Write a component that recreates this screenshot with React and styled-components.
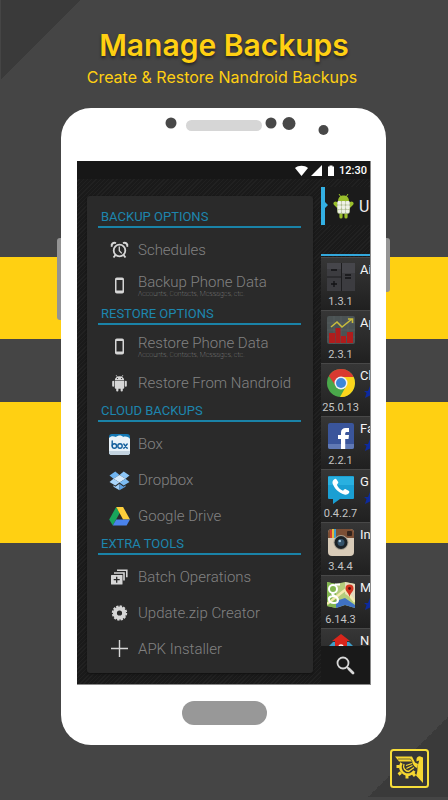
import React from 'react';
import styled, { createGlobalStyle } from 'styled-components';

const GlobalStyle = createGlobalStyle`
  * { box-sizing: border-box; }
  body { margin: 0; background: #454545; }
  button {
    border: 0;
    padding: 0;
    background: none;
    font: inherit;
    color: inherit;
    text-align: left;
  }
  svg { display: block; flex: none; }
`;

/* Page */

const Page = styled.main`
  display: flex;
  flex-direction: column;
  min-height: 100vh;
  font-family: Roboto, sans-serif;
  background:
    linear-gradient(135deg, #3a3a3a 50%, transparent 50%) 1px 0 / 80px 80px no-repeat,
    linear-gradient(315deg, #3a3a3a 50%, transparent 50%) right 0 bottom 3px / 80px 80px no-repeat,
    linear-gradient(#454545 257px, #ffd012 257px, #ffd012 339px, #454545 339px,
      #454545 402px, #ffd012 402px, #ffd012 543px, #454545 543px);
`;

const Header = styled.header`
  padding-top: 24px;
  height: 108px;
  text-align: center;
  color: #ffd012;
  font-family: Inter, sans-serif;
`;

const Title = styled.h1`
  margin: 0;
  font-size: 30px;
  line-height: 42px;
  font-weight: 600;
  text-shadow: 0 2px 3px rgba(0, 0, 0, 0.5);
`;

const Subtitle = styled.p`
  margin: 0;
  padding-right: 4px;
  font-size: 16px;
  line-height: 22px;
`;

const Footer = styled.footer`
  display: flex;
  justify-content: flex-end;
  padding: 4px 19px 12px 0;
`;

/* Phone */

const Phone = styled.section`
  position: relative;
  margin: 0 62px 0 61px;
  padding: 0 15px 0 16px;
  border-radius: 30px;
  background: #fff;
`;

const SideKey = styled.span`
  position: absolute;
  top: 130px;
  ${(p) => p.$side}: -4px;
  width: 4px;
  height: ${(p) => p.$length}px;
  border-radius: ${(p) => (p.$side === 'left' ? '3px 0 0 3px' : '0 3px 3px 0')};
  background: #949494;
`;

const Sensors = styled.div`
  display: flex;
  justify-content: center;
  height: 53px;
  padding: 9px 0 0 45px;
`;

const Bottom = styled.div`
  display: flex;
  justify-content: center;
  padding: 16px 0 20px;
`;

const HomeKey = styled.button`
  width: 85px;
  height: 24px;
  border-radius: 12px;
  background: #989898;
`;

const Screen = styled.div`
  border: solid #8a8a8a;
  border-width: 0 1px 1px 0;
  background: #1c1c1c repeating-linear-gradient(135deg, #1a1a1a 0 2px, #212121 2px 3px);
`;

const StatusBar = styled.div`
  display: flex;
  justify-content: flex-end;
  align-items: center;
  gap: 4px;
  height: 18px;
  padding: 1px 3px 0 0;
  background: #171717;
  color: #fff;
  font-size: 11px;
  font-weight: 500;
`;

const Content = styled.div`
  display: flex;
  height: 505px;
`;

/* Drawer */

const Drawer = styled.nav`
  flex: 1;
  min-width: 0;
  padding: 17px 8px 11px 10px;
`;

const Panel = styled.div`
  padding: 11px 12px 6px 11px;
  border-radius: 3px;
  background: #2a2a2a;
  box-shadow: 0 1px 2px #111;
`;

const SectionTitle = styled.h2`
  margin: 0 0 4px;
  padding-left: 3px;
  border-bottom: 2px solid #1a83a8;
  color: #1d86ae;
  font-size: 13px;
  line-height: 19px;
  font-weight: 400;
`;

const Item = styled.button`
  display: flex;
  align-items: center;
  gap: 8px;
  width: 100%;
  height: 36px;
  padding-left: 11px;
  white-space: nowrap;
`;

const ItemText = styled.span`
  display: flex;
  flex-direction: column;
  color: #828282;
  font-size: 15px;
  line-height: 16px;
  font-weight: 300;
`;

const ItemNote = styled.small`
  font-size: 7px;
  line-height: 8px;
  font-weight: 100;
  color: #a0a0a0;
`;

/* App list */

const Apps = styled.div`
  display: flex;
  flex-direction: column;
  width: 49px;
  padding-top: 8px;
  overflow: hidden;
`;

const AppsHeader = styled.div`
  display: flex;
  align-items: center;
  gap: 5px;
  height: 38px;
  background: #1b1b1b;
  color: #eee;
  font-size: 16px;
`;

const Tabs = styled.div`
  height: 31px;
  border-bottom: 2px solid #33a8dc;
`;

const AppList = styled.div`
  flex: 1;
  min-height: 0;
  padding-top: 1px;
  overflow: hidden;
`;

const AppRow = styled.button`
  display: grid;
  grid-template-columns: 39px 1fr;
  grid-template-rows: 35px 17px;
  width: 100%;
  height: 53px;
  border-top: 1px solid #484848;
  background: linear-gradient(#363636, #202020);
  white-space: nowrap;
  overflow: hidden;
`;

const AppIcon = styled.span`
  padding: 5px 0 0 6px;
`;

const AppName = styled.span`
  position: relative;
  padding-top: 3px;
  color: #f4f4f4;
  font-size: 13px;
  line-height: 18px;
  font-weight: 400;
`;

const Star = styled.svg`
  position: absolute;
  top: 22px;
  left: 4px;
`;

const Version = styled.span`
  justify-self: center;
  color: #c4c4c4;
  font-size: 11px;
  line-height: 17px;
`;

const SearchBar = styled.div`
  display: flex;
  justify-content: center;
  align-items: center;
  height: 38px;
  background: #191919;
`;

/* Drawer icons */

const GREY = '#d6d6d6';

function ClockIcon() {
  return (
    <svg width="21" height="21" viewBox="0 0 21 21" fill="none" stroke={GREY}>
      <circle cx="10.5" cy="10.5" r="5.8" strokeWidth="1.8" />
      <path d="M10.3 6.500v4.3l2.5 2.6" strokeWidth="1.3" />
      <path d="M2.8 6.700C2 3.700 4.5 2 7 3.100M18.2 6.700c.8-3-1.7-4.7-4.2-3.6" strokeWidth="2" />
      <path d="M6.6 14.900 4.5 17.500M14.4 14.900l2.1 2.6" strokeWidth="1.8" />
    </svg>
  );
}

function PhoneIcon() {
  return (
    <svg width="21" height="21" viewBox="0 0 21 21">
      <rect x="6" y="1.5" width="9" height="16" rx="1.8" fill={GREY} />
      <rect x="7.5" y="4" width="6" height="10.5" fill="#2a2a2a" />
    </svg>
  );
}

function AndroidIcon() {
  return (
    <svg width="21" height="21" viewBox="0 0 21 21" fill={GREY}>
      <path d="M5.8 7.2C6 4.4 8 3.2 10.5 3.2S15 4.4 15.2 7.2z" />
      <path d="M7 2l1.4 2M14 2l-1.4 2" stroke={GREY} strokeWidth=".7" />
      <path d="M5.8 7.8h9.4v7a1 1 0 0 1-1 1H6.8a1 1 0 0 1-1-1z" />
      <rect x="3.2" y="7.8" width="2" height="6" rx="1" />
      <rect x="15.8" y="7.8" width="2" height="6" rx="1" />
      <rect x="7.2" y="14" width="2.2" height="4.6" rx="1" />
      <rect x="11.6" y="14" width="2.2" height="4.6" rx="1" />
      <circle cx="8.5" cy="5.5" r=".6" fill="#2a2a2a" />
      <circle cx="12.5" cy="5.5" r=".6" fill="#2a2a2a" />
    </svg>
  );
}

function BoxIcon() {
  return (
    <svg width="21" height="21" viewBox="0 0 21 21">
      <rect width="21" height="21" rx="3" fill="#1478b4" />
      <path d="M0 4c2-2 4-2 7-1 2-2 6-2 7 0 3-1 6 0 7 2v13a3 3 0 0 1-3 3H3a3 3 0 0 1-3-3z" fill="#e9f2f8" />
      <path d="M0 17h21v1a3 3 0 0 1-3 3H3a3 3 0 0 1-3-3z" fill="#c3d3df" />
      <g fill="none" stroke="#145f9c" strokeWidth="1.4" strokeLinecap="round">
        <path d="M3.2 7v5" />
        <circle cx="5.4" cy="12" r="2.2" />
        <circle cx="11" cy="12" r="2.2" />
        <path d="M14.8 10l3.4 4.2M18.2 10l-3.4 4.2" />
      </g>
    </svg>
  );
}

function DropboxIcon() {
  return (
    <svg width="21" height="21" viewBox="0 0 21 21">
      <path d="M6.3 1.5 10.5 5 4.5 8.7.5 5.5z" fill="#6fb4f0" />
      <path d="M14.7 1.5 10.5 5l6 3.7 4-3.2z" fill="#8cc6f7" />
      <path d="M4.5 8.7 10.5 5l6 3.7-6 3.8z" fill="#d4eafc" />
      <path d="M4.5 8.7.5 12l5.8 3.6 4.2-3.1z" fill="#a9d5fa" />
      <path d="M16.5 8.7l4 3.3-5.8 3.6-4.2-3.1z" fill="#7dbcf3" />
      <path d="M4.5 15.2v1.5l6 3.5v-6.500l-4.2 3z" fill="#9ccdf8" />
      <path d="M16.5 15.2v1.5l-6 3.5v-6.500l4.2 3z" fill="#5d9fe0" />
    </svg>
  );
}

function DriveIcon() {
  return (
    <svg width="21" height="21" viewBox="0 0 21 21">
      <path d="M7.2 1 10.7 7 3.8 19.5.2 13.5z" fill="#18a55b" />
      <path d="M7.2 1h6.900L21 13.500h-6.900z" fill="#fdce3b" />
      <path d="M7.2 13.5H21l-3.4 6H3.8z" fill="#4a83ec" />
    </svg>
  );
}

function BatchIcon() {
  return (
    <svg width="21" height="21" viewBox="0 0 21 21">
      <path d="M8 3.2h9.8v7" fill="none" stroke={GREY} strokeWidth="1.6" />
      <path d="M5 6h10v7.5" fill="none" stroke={GREY} strokeWidth="1.6" />
      <rect x="2" y="8" width="11.5" height="9.5" rx=".5" fill={GREY} />
      <path d="M7.7 9.7v6M4.7 12.7h6" stroke="#2a2a2a" strokeWidth="1.3" />
    </svg>
  );
}

function GearIcon() {
  return (
    <svg width="21" height="21" viewBox="0 0 21 21" fill="none" stroke={GREY}>
      <circle cx="10.5" cy="10" r="4.6" strokeWidth="4" />
      <circle cx="10.5" cy="10" r="6.8" strokeWidth="1.8" strokeDasharray="2.3 1.26" />
    </svg>
  );
}

function PlusIcon() {
  return (
    <svg width="21" height="21" viewBox="0 0 21 21">
      <path d="M10.5 1v17M2 9.5h17" stroke={GREY} strokeWidth="1.4" />
    </svg>
  );
}

/* App icons */

function BackupRobot() {
  return (
    <svg width="21" height="26" viewBox="0 0 21 26">
      <path d="M6 1l2 3M15 1l-2 3" stroke="#9abf2c" />
      <path d="M5 8c.3-4 2.5-5.5 5.5-5.5S15.7 4 16 8z" fill="#9abf2c" />
      <path d="M2.5 10.5 5 13M18.5 10.5 16 13" stroke="#9abf2c" strokeWidth="4" strokeLinecap="round" />
      <path d="M8 19v5M13 19v5" stroke="#9abf2c" strokeWidth="3.2" strokeLinecap="round" />
      <rect x="4" y="8" width="13" height="13" rx="3" fill="#a9b78a" />
      <g fill="#eef1e6">
        <rect x="4.5" y="8" width="3.7" height="3.7" rx="1" />
        <rect x="8.7" y="8" width="3.7" height="3.7" rx="1" />
        <rect x="12.9" y="8" width="3.7" height="3.7" rx="1" />
        <rect x="4.5" y="12.2" width="3.7" height="3.7" rx="1" />
        <rect x="8.7" y="12.2" width="3.7" height="3.7" rx="1" />
        <rect x="12.9" y="12.2" width="3.7" height="3.7" rx="1" />
        <rect x="5" y="16.4" width="3.2" height="3.7" rx="1" />
        <rect x="8.7" y="16.4" width="3.7" height="3.7" rx="1" />
        <rect x="12.9" y="16.4" width="3.2" height="3.7" rx="1" />
      </g>
    </svg>
  );
}

function CalculatorIcon() {
  return (
    <svg width="28" height="28" viewBox="0 0 28 28">
      <rect width="28" height="28" rx="1" fill="#1d1d1f" />
      <path d="M0 0h14v13.5H0zM0 14.5h14V28H0zM15 0h13v28H15z" fill="#3c3c40" />
      <path d="M0 0h14v6H0zM15 0h13v10H15z" fill="#46464b" />
      <path d="M4 7h6M4 21h6M7 18v6M18 12h6M18 15h6" stroke="#121214" strokeWidth="1.3" />
    </svg>
  );
}

function ChartIcon() {
  return (
    <svg width="28" height="28" viewBox="0 0 28 28">
      <rect width="28" height="28" rx="2" fill="#4b5354" />
      <path d="M0 7h28M0 14h28M0 21h28M7 0v28M14 0v28M21 0v28" stroke="#5d6667" strokeWidth=".5" />
      <path d="M2 17h6v10H2zM8.5 12h5v15h-5zM14 20h5v7h-5zM20 16h6v11h-6z" fill="#b01c1c" />
      <path d="M4 11l6-5 5 5 10-8M21 3h4.5v4" fill="none" stroke="#c9bd3c" strokeWidth="1.6" />
    </svg>
  );
}

function ChromeIcon() {
  return (
    <svg width="28" height="28" viewBox="0 0 28 28">
      <circle cx="14" cy="14" r="14" fill="#4aa84a" />
      <path d="M14 14 1.9 7A14 14 0 0 1 26.6 8z" fill="#d93a30" />
      <path d="M14 8h12.6A14 14 0 0 1 13 28l6.2-11z" fill="#fbd51c" />
      <path d="M1.9 7 8.8 17 14 8z" fill="#d93a30" />
      <circle cx="14" cy="14" r="6.5" fill="#f2f2f2" />
      <circle cx="14" cy="14" r="5" fill="#3c86d8" />
    </svg>
  );
}

function FacebookIcon() {
  return (
    <svg width="28" height="28" viewBox="0 0 28 28">
      <rect x="1" y="1" width="26" height="26" rx="2" fill="#3a559b" />
      <path d="M1 22h26v3a2 2 0 0 1-2 2H3a2 2 0 0 1-2-2z" fill="#6079b5" />
      <path d="M14 27V17h-3v-4h3v-2.5C14 7.5 16 6 18.5 6H22v4h-2c-1.300 0-1.800.5-1.800 1.500V13H22l-.5 4h-3.300v10z" fill="#fff" />
    </svg>
  );
}

function VoiceIcon() {
  return (
    <svg width="28" height="30" viewBox="0 0 28 30">
      <path d="M2 1h24a1 1 0 0 1 1 1v21a1 1 0 0 1-1 1H13l-7 5v-5H2a1 1 0 0 1-1-1V2a1 1 0 0 1 1-1z" fill="#1a9fd3" />
      <path d="M1 2h26v8H1z" fill="#29b0e0" />
      <path d="M7 4.500c1-1 2-.8 2.600 0l1.600 2.600c.5 1-.6 1.700-1.300 2.600 1.200 3 3.300 5 6.200 6 .8-.9 1.600-2 2.600-1.500l2.900 1.600c1 .6.900 1.600.2 2.500-1 1.300-2.700 1.800-4.500 1.200C11.500 17.500 7.300 13.500 5.600 8.500 5.200 7 5.800 5.500 7 4.500z" fill="#fff" />
    </svg>
  );
}

function CameraIcon() {
  return (
    <svg width="28" height="28" viewBox="0 0 28 28">
      <rect x="1" y="1" width="26" height="27" rx="4" fill="#d8cbb8" />
      <path d="M1 10V5a4 4 0 0 1 4-4h18a4 4 0 0 1 4 4v5z" fill="#7c4f35" />
      <path d="M3 2h2v8H3z" fill="#d33b32" />
      <path d="M5 1h2v9H5z" fill="#e6b93a" />
      <path d="M7 1h2v9H7z" fill="#3d9bd0" />
      <rect x="20" y="3" width="5" height="5" rx="1" fill="#33231c" />
      <circle cx="14" cy="14.5" r="7.5" fill="#a8a092" />
      <circle cx="14" cy="14.5" r="6.5" fill="#1c2227" />
      <circle cx="14" cy="14.5" r="3.5" fill="#35536b" />
      <circle cx="12.8" cy="13" r="1.3" fill="#a9c9dd" />
    </svg>
  );
}

function MapsIcon() {
  return (
    <svg width="28" height="28" viewBox="0 0 28 28">
      <path d="M0 1l9 2 9-2 10 2v24l-10-3-9 3-9-2z" fill="#b5cc7b" />
      <path d="M0 1l9 2v24l-9-2z" fill="#82b550" />
      <path d="M18 1l10 2v16l-10-6z" fill="#e3d9bd" />
      <path d="M9 20l9-3 10 7v3l-10-3-9 3z" fill="#3f72c4" />
      <path d="M0 23 18 9l10 12" fill="none" stroke="#f4ebb0" strokeWidth="2.5" />
      <g fill="none" stroke="#fff" strokeWidth="2">
        <circle cx="6" cy="8" r="4" />
        <path d="M13 3.5H8M6 12c-3 2 5 3 5 7s-8 4-9 0 4-4 6-4" />
      </g>
      <path d="M22.5 17c0-5-4-6-4-9.500a4 4 0 0 1 8 0c0 3.500-4 4.500-4 9.500z" fill="#d4341f" />
      <circle cx="22.5" cy="7.5" r="1.4" fill="#501008" />
    </svg>
  );
}

function HouseIcon() {
  return (
    <svg width="28" height="28" viewBox="0 0 28 28">
      <path d="M0 14l6-6h16l6 6v10H0z" fill="#3f9cc6" />
      <path d="M14 0l9 7h-3v18H8V7H5z" fill="#d8251b" />
      <circle cx="14" cy="13" r="2" fill="none" stroke="#fff" strokeWidth="1.5" />
    </svg>
  );
}

function SearchIcon() {
  return (
    <svg width="19" height="19" viewBox="0 0 19 19" fill="none" stroke="#d8d8d8">
      <circle cx="7" cy="7" r="5.5" strokeWidth="1.8" />
      <path d="M11 11l2 2" strokeWidth="1.8" />
      <path d="M13 13l4 4" strokeWidth="2.8" strokeLinecap="round" />
    </svg>
  );
}

function EagleBadge() {
  return (
    <svg width="39" height="39" viewBox="0 0 39 39">
      <rect x="1" y="1" width="37" height="37" rx="2.5" fill="#363636" stroke="#f6dd3a" strokeWidth="2" />
      {/* gear */}
      <g fill="none" stroke="#f6d731">
        <path d="M11.5 14a7.5 7.5 0 1 0 13 8" strokeWidth="2.6" />
        <path d="M9.500 17.5H6.5M11 23.5l-2.5 2M17 26v3.5M23 24.5l2 2.5" strokeWidth="3" />
      </g>
      {/* claw */}
      <path d="M14 15c-1.500 4 1 7.500 5.500 7.500M16 16.500l6-2M16.500 19.500l6-3M19 22l5-3.500" fill="none" stroke="#f6d731" strokeWidth="1.3" />
      {/* wing */}
      <path d="M5 7.500h17l3 6 3 1.500-1 4c-3-1-4-4-5.500-6.500H9L7.500 10.500z" fill="#f6d731" />
      <path d="M8 10h12.500l2 3.500" fill="none" stroke="#363636" strokeWidth=".7" />
      {/* head and body */}
      <path d="M26.500 10c.5-2 2-3 4-2.500L33 8.500V34l-7-7.500c1.500-3 1.500-6 1.500-9l1.700-6-2.700 1z" fill="#f6d731" />
    </svg>
  );
}

const sections = [
  {
    title: 'BACKUP OPTIONS',
    items: [
      { label: 'Schedules', icon: ClockIcon },
      { label: 'Backup Phone Data', note: 'Accounts, Contacts, Messages, etc.', icon: PhoneIcon },
    ],
  },
  {
    title: 'RESTORE OPTIONS',
    items: [
      { label: 'Restore Phone Data', note: 'Accounts, Contacts, Messages, etc.', icon: PhoneIcon },
      { label: 'Restore From Nandroid', icon: AndroidIcon },
    ],
  },
  {
    title: 'CLOUD BACKUPS',
    items: [
      { label: 'Box', icon: BoxIcon },
      { label: 'Dropbox', icon: DropboxIcon },
      { label: 'Google Drive', icon: DriveIcon },
    ],
  },
  {
    title: 'EXTRA TOOLS',
    items: [
      { label: 'Batch Operations', icon: BatchIcon },
      { label: 'Update.zip Creator', icon: GearIcon },
      { label: 'APK Installer', icon: PlusIcon },
    ],
  },
];

const apps = [
  { name: 'Ai', version: '1.3.1', icon: CalculatorIcon },
  { name: 'Ap', version: '2.3.1', icon: ChartIcon },
  { name: 'Ch', version: '25.0.13', icon: ChromeIcon, starred: true },
  { name: 'Fa', version: '2.2.1', icon: FacebookIcon, starred: true },
  { name: 'G', version: '0.4.2.7', icon: VoiceIcon, starred: true },
  { name: 'In', version: '3.4.4', icon: CameraIcon },
  { name: 'M', version: '6.14.3', icon: MapsIcon, starred: true },
  { name: 'N', icon: HouseIcon },
];

export default function App() {
  return (
    <Page>
      <GlobalStyle />
      <Header>
        <Title>Manage Backups</Title>
        <Subtitle>Create &amp; Restore Nandroid Backups</Subtitle>
      </Header>
      <Phone>
        <SideKey $side="left" $length={82} />
        <SideKey $side="right" $length={54} />
        <Sensors>
          <svg width="164" height="28" viewBox="0 0 164 28" fill="#484848">
            <circle cx="6" cy="6" r="5.5" />
            <rect x="21" y="3" width="76" height="11" rx="5.5" fill="#d6d6d6" />
            <circle cx="106" cy="6" r="5.5" />
            <circle cx="124" cy="6.5" r="6.5" />
            <circle cx="158.5" cy="13" r="5" />
          </svg>
        </Sensors>
        <Screen>
          <StatusBar>
            <svg width="40" height="12" viewBox="0 0 40 12" fill="#fff">
              <path d="M0 3C3.5 0 9.5 0 13 3L6.5 11z" />
              <path d="M27 0v11H16z" />
              <path d="M33 1.5h1.5V.5h3v1H39V11h-6z" />
            </svg>
            12:30
          </StatusBar>
          <Content>
            <Drawer>
              <Panel>
                {sections.map((section) => (
                  <section key={section.title}>
                    <SectionTitle>{section.title}</SectionTitle>
                    {section.items.map(({ label, note, icon: Icon }) => (
                      <Item key={label} type="button">
                        <Icon />
                        <ItemText>
                          {label}
                          {note && <ItemNote>{note}</ItemNote>}
                        </ItemText>
                      </Item>
                    ))}
                  </section>
                ))}
              </Panel>
            </Drawer>
            <Apps>
              <AppsHeader>
                <svg width="7" height="38" viewBox="0 0 7 38">
                  <path d="M0 0h4v15l3 3-3 3v17H0z" fill="#33b0e3" />
                </svg>
                <BackupRobot />
                U
              </AppsHeader>
              <Tabs />
              <AppList>
                {apps.map(({ name, version, icon: Icon, starred }) => (
                  <AppRow key={name} type="button">
                    <AppIcon>
                      <Icon />
                    </AppIcon>
                    <AppName>
                      {name}
                      {starred && (
                        <Star width="12" height="12" viewBox="0 0 12 12">
                          <path d="M6 0l1.5 4.5H12L8.5 7.5 10 12 6 9.5 1 12l1.5-5L0 5h4z" fill="#0d2a9e" />
                        </Star>
                      )}
                    </AppName>
                    <Version>{version}</Version>
                  </AppRow>
                ))}
              </AppList>
              <SearchBar>
                <button type="button" aria-label="Search">
                  <SearchIcon />
                </button>
              </SearchBar>
            </Apps>
          </Content>
        </Screen>
        <Bottom>
          <HomeKey type="button" aria-label="Home" />
        </Bottom>
      </Phone>
      <Footer>
        <EagleBadge />
      </Footer>
    </Page>
  );
}
